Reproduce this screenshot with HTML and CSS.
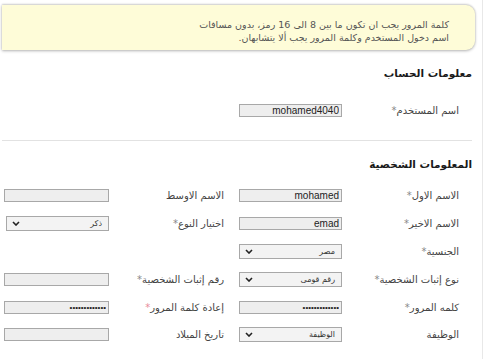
FILE: index.html
```html
<!DOCTYPE html>
<html lang="ar">
<head>
<meta charset="utf-8">
<title>التسجيل</title>
<link rel="stylesheet" href="styles.css">
</head>
<body>
<div class="page" dir="rtl">
  <div class="notice">
    <p>كلمة المرور يجب ان تكون ما بين 8 الى 16 رمز، بدون مسافات</p>
    <p>اسم دخول المستخدم وكلمة المرور يجب ألا يتشابهان.</p>
  </div>

  <h2 class="section-title first">معلومات الحساب</h2>
  <div class="grid single">
    <label class="lbl">اسم المستخدم<span class="req">*</span></label>
    <div class="cell"><input class="txt" type="text" value="mohamed4040"></div>
  </div>

  <hr class="divider">

  <h2 class="section-title">المعلومات الشخصية</h2>
  <div class="grid">
    <label class="lbl">الاسم الاول<span class="req">*</span></label>
    <div class="cell"><input class="txt" type="text" value="mohamed"></div>
    <label class="lbl lbl2">الاسم الاوسط</label>
    <div class="cell"><input class="txt wide" type="text" value=""></div>

    <label class="lbl">الاسم الاخير<span class="req">*</span></label>
    <div class="cell"><input class="txt" type="text" value="emad"></div>
    <label class="lbl lbl2">اختيار النوع<span class="req">*</span></label>
    <div class="cell"><div class="sel"><span class="sel-text">ذكر</span><svg class="chev" viewBox="0 0 8 5" width="8" height="5"><polyline points="1,1 4,4 7,1"/></svg></div></div>

    <label class="lbl">الجنسية<span class="req">*</span></label>
    <div class="cell"><div class="sel"><span class="sel-text">مصر</span><svg class="chev" viewBox="0 0 8 5" width="8" height="5"><polyline points="1,1 4,4 7,1"/></svg></div></div>
    <div class="empty"></div>
    <div class="empty"></div>

    <label class="lbl">نوع إثبات الشخصية<span class="req">*</span></label>
    <div class="cell"><div class="sel"><span class="sel-text">رقم قومى</span><svg class="chev" viewBox="0 0 8 5" width="8" height="5"><polyline points="1,1 4,4 7,1"/></svg></div></div>
    <label class="lbl lbl2">رقم إثبات الشخصية<span class="req">*</span></label>
    <div class="cell"><input class="txt wide" type="text" value=""></div>

    <label class="lbl">كلمه المرور<span class="req">*</span></label>
    <div class="cell"><input class="txt pw" type="password" value="mohamed4040ab"></div>
    <label class="lbl lbl2">إعادة كلمة المرور<span class="req red">*</span></label>
    <div class="cell"><input class="txt wide pw" type="password" value="mohamed4040ab"></div>

    <label class="lbl">الوظيفة</label>
    <div class="cell"><div class="sel"><span class="sel-text">الوظيفة</span><svg class="chev" viewBox="0 0 8 5" width="8" height="5"><polyline points="1,1 4,4 7,1"/></svg></div></div>
    <label class="lbl lbl2">تاريخ الميلاد</label>
    <div class="cell"><input class="txt wide" type="text" value=""></div>
  </div>
</div>
</body>
</html>
```
FILE: styles.css
```css
html, body {
  margin: 0;
  padding: 0;
  background: #ffffff;
}

body {
  direction: ltr;
  font-family: "DejaVu Sans", "Liberation Sans", sans-serif;
  color: #333333;
}

.page {
  direction: rtl;
  width: 483px;
  height: 359px;
  box-sizing: border-box;
  border-right: 1px solid #e8e8e8;
  padding-top: 5px;
}

.notice {
  margin: 0 7px 0 2px;
  height: 45px;
  box-sizing: border-box;
  padding: 13px 26px 0 0;
  background: #fefcd8;
  border-radius: 0 9px 9px 0;
  box-shadow: 0 1px 3px rgba(0, 0, 0, 0.3), 0 -1px 2px rgba(0, 0, 0, 0.16);
  font-size: 9.5px;
  line-height: 13px;
  color: #555555;
}

.notice p {
  margin: 0;
}

.section-title {
  margin: 15px 10px 0 0;
  font-size: 10.5px;
  line-height: 16px;
  font-weight: bold;
  color: #1a1a1a;
}

.divider {
  margin: 16px 10px 0 2px;
  border: 0;
  border-top: 1px solid #e2e2e2;
  height: 0;
}

.grid {
  display: grid;
  grid-template-columns: 117px 103px 130px 105px;
  grid-auto-rows: 27.8px;
  padding-right: 23px;
  margin-top: 10px;
  align-items: center;
}

.grid.single {
  grid-auto-rows: 28px;
  margin-top: 15px;
}

.lbl {
  font-size: 10px;
  color: #444444;
  white-space: nowrap;
}

.lbl2 {
  padding-right: 15px;
}

.req {
  color: #888888;
}

.req.red {
  color: #e88a9a;
}

.cell {
  display: flex;
  justify-content: flex-start;
}

.txt {
  width: 103px;
  height: 13px;
  box-sizing: border-box;
  margin: 0;
  padding: 0 2px;
  border: 1px solid #a8a8a8;
  background: #eeeeee;
  font-family: "Liberation Sans", sans-serif;
  font-size: 10px;
  line-height: 11px;
  color: #222222;
  text-align: right;
  direction: ltr;
  outline: none;
}

.txt.wide {
  width: 105px;
}

.txt.pw {
  font-size: 8px;
  letter-spacing: 0;
}

.sel {
  position: relative;
  width: 103px;
  height: 15px;
  box-sizing: border-box;
  border: 1px solid #a8a8a8;
  background: #f3f3f3;
  display: flex;
  align-items: center;
  padding-right: 6px;
  font-size: 8px;
  color: #333333;
}

.chev {
  position: absolute;
  left: 5px;
  top: 4px;
  fill: none;
  stroke: #222222;
  stroke-width: 1.6;
}
```
